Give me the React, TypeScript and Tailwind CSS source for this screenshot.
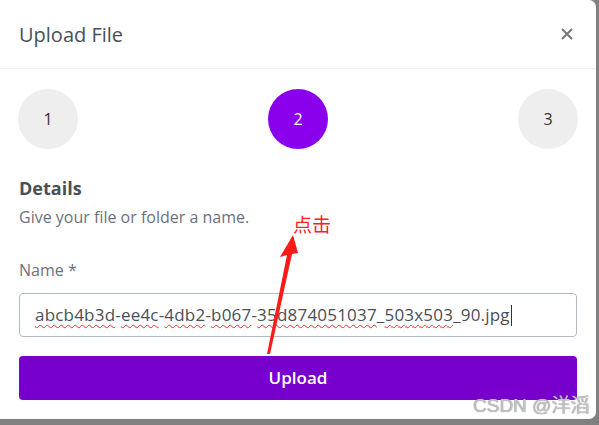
import React from "react";

const font = { fontFamily: '"Open Sans", "Noto Sans", "Noto Sans CJK SC", sans-serif' };

function Step({ n, active }: { n: number; active?: boolean }) {
  return (
    <div
      className={
        active
          ? "w-[60px] h-[60px] rounded-full bg-[#8a00ec] text-white flex items-center justify-center text-[16px]"
          : "w-[60px] h-[60px] rounded-full bg-[#eeeeee] text-[#333] flex items-center justify-center text-[16px]"
      }
    >
      {n}
    </div>
  );
}

const Typo = ({ children }: { children: React.ReactNode }) => (
  <span className="underline decoration-wavy decoration-[#ff2a2a] decoration-1 underline-offset-[3px]">
    {children}
  </span>
);

export default function App() {
  return (
    <div className="w-[599px] h-[425px] bg-[#808080] overflow-hidden" style={font}>
      <div className="relative w-[596px] h-[419px] bg-white rounded-tr-[7px] rounded-br-[7px]">
        {/* header */}
        <div className="h-[69px] flex items-center justify-between pl-[19px] pr-[22px] border-b border-[#eceef2]">
          <span className="text-[20px] text-[#4a4f57] mt-[1px]">Upload File</span>
          <svg width="14" height="14" viewBox="0 0 14 14">
            <path d="M2 2 L12 12 M12 2 L2 12" stroke="#777" strokeWidth="2" />
          </svg>
        </div>

        {/* steps */}
        <div className="flex justify-between px-[18px] pt-[20px]">
          <Step n={1} />
          <Step n={2} active />
          <Step n={3} />
        </div>

        <div className="px-[19px]">
          <div className="mt-[27px] text-[18px] font-bold text-[#4a4f57] leading-[24px]">Details</div>
          <div className="mt-[6px] text-[16px] text-[#6b7180] leading-[22px]">
            Give your file or folder a name.
          </div>
          <div className="mt-[31px] text-[16px] text-[#6b7180] leading-[22px]">Name *</div>

          <div className="mt-[12px] h-[44px] border border-[#b4bac2] rounded-[4px] flex items-center pl-[15px] text-[17px] tracking-[0.2px] text-[#4a4f57] whitespace-nowrap">
            <Typo>abcb4b3d</Typo>-<Typo>ee4c</Typo>-<Typo>4db2</Typo>-<Typo>b067</Typo>-
            <Typo>35d874051037</Typo>_<Typo>503x503</Typo>_90.jpg
            <span className="inline-block w-[1px] h-[21px] bg-[#333] ml-[1px]" />
          </div>

          <button className="mt-[19px] w-full h-[44px] rounded-[4px] bg-[#7700cc] text-white text-[17px] font-semibold">
            Upload
          </button>
        </div>

        {/* annotation */}
        <span
          className="absolute left-[293px] top-[214px] text-[19px] text-[#ff2020] leading-none"
          style={{ fontFamily: '"Noto Sans CJK SC", sans-serif' }}
        >
          点击
        </span>
        <svg className="absolute left-0 top-0" width="596" height="419">
          <polygon
            points="293,235 298,253 292,254 270,354 267,354 287,255 280,257"
            fill="#ff1a1a"
          />
        </svg>

        {/* watermark */}
        <span
          className="absolute left-[473px] top-[396px] text-[19px] text-[#c4c4c4] leading-none"
          style={{
            fontFamily: '"Liberation Sans", "Noto Sans CJK SC", sans-serif',
            textShadow: "0 0 1px #777",
          }}
        >
          CSDN @洋滔
        </span>
      </div>
    </div>
  );
}
